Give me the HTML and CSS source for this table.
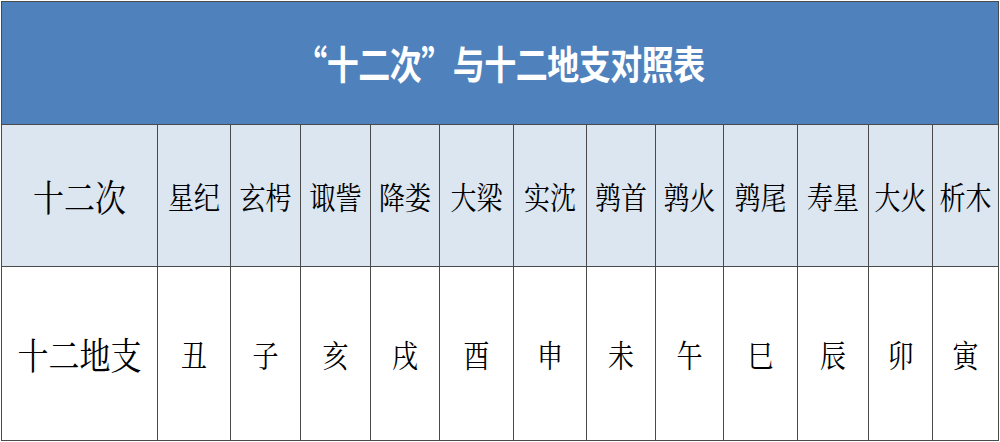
FILE: index.html
```html
<!DOCTYPE html>
<html lang="zh">
<head>
<meta charset="utf-8">
<link rel="stylesheet" href="styles.css">
</head>
<body>
<table class="chart">
  <colgroup>
    <col class="c0"><col class="c1"><col class="c2"><col class="c3"><col class="c4"><col class="c5"><col class="c6"><col class="c7"><col class="c8"><col class="c9"><col class="c10"><col class="c11"><col class="c12">
  </colgroup>
  <tr class="title-row">
    <th colspan="13"><span class="t">“十二次”与十二地支对照表</span></th>
  </tr>
  <tr class="head-row">
    <td class="label"><span class="s">十二次</span></td>
    <td><span class="s">星纪</span></td>
    <td><span class="s">玄枵</span></td>
    <td><span class="s">诹訾</span></td>
    <td><span class="s">降娄</span></td>
    <td><span class="s">大梁</span></td>
    <td><span class="s">实沈</span></td>
    <td><span class="s">鹑首</span></td>
    <td><span class="s">鹑火</span></td>
    <td><span class="s">鹑尾</span></td>
    <td><span class="s">寿星</span></td>
    <td><span class="s">大火</span></td>
    <td><span class="s">析木</span></td>
  </tr>
  <tr class="body-row">
    <td class="label"><span class="s">十二地支</span></td>
    <td><span class="s">丑</span></td>
    <td><span class="s">子</span></td>
    <td><span class="s">亥</span></td>
    <td><span class="s">戌</span></td>
    <td><span class="s">酉</span></td>
    <td><span class="s">申</span></td>
    <td><span class="s">未</span></td>
    <td><span class="s">午</span></td>
    <td><span class="s">巳</span></td>
    <td><span class="s">辰</span></td>
    <td><span class="s">卯</span></td>
    <td><span class="s">寅</span></td>
  </tr>
</table>
</body>
</html>
```

FILE: styles.css
```css
html, body {
  margin: 0;
  padding: 0;
  background: #ffffff;
}
body {
  padding: 1px 0 0 1px;
}
.chart {
  border-collapse: collapse;
  table-layout: fixed;
  width: 997px;
  font-family: "Noto Serif CJK SC", "Noto Sans CJK SC", serif;
  color: #000;
}
.c0 { width: 156px; }
.c1 { width: 73px; }
.c2 { width: 70px; }
.c3 { width: 70px; }
.c4 { width: 69px; }
.c5 { width: 74px; }
.c6 { width: 73px; }
.c7 { width: 69px; }
.c8 { width: 68px; }
.c9 { width: 74px; }
.c10 { width: 71px; }
.c11 { width: 64px; }
.c12 { width: 66px; }

.chart th, .chart td {
  border: 1px solid #4a4a4a;
  padding: 0;
  text-align: center;
  vertical-align: middle;
  white-space: nowrap;
  overflow: hidden;
}
.title-row th {
  height: 122px;
  background: #4f81bd;
  color: #ffffff;
  font-family: "Noto Sans CJK SC", sans-serif;
  font-weight: 700;
  font-size: 32px;
}
.head-row td {
  height: 141px;
  background: #dce6f1;
  font-size: 26px;
}
.body-row td {
  height: 173px;
  background: #ffffff;
  font-size: 26px;
}
.head-row td.label, .body-row td.label {
  font-size: 31px;
}
.t, .s {
  display: inline-block;
  transform: scaleY(1.2);
}
.t {
  position: relative;
  top: -1px;
  letter-spacing: -0.5px;
}
.s {
  position: relative;
  top: 0;
}
```
